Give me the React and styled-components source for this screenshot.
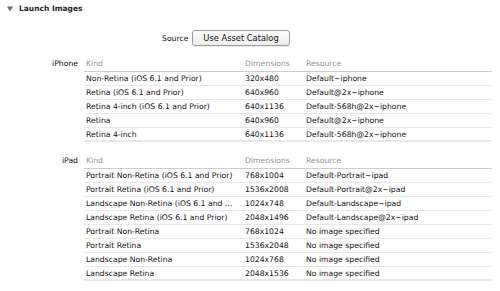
import React from 'react'
import styled, { createGlobalStyle } from 'styled-components'

const GlobalStyle = createGlobalStyle`
  html, body {
    margin: 0;
    padding: 0;
    background: #ffffff;
  }
  body {
    font-family: "DejaVu Sans", "Liberation Sans", sans-serif;
    font-size: 7.7px;
    color: #111;
  }
`;

const Page = styled.div`
  width: 500px;
  height: 291px;
  overflow: hidden;
  background: #fff;
`;

const Header = styled.div`
  display: flex;
  align-items: center;
  height: 17px;
  padding-left: 7px;
  gap: 6px;
  font-weight: bold;
  font-size: 7.5px;
  color: #222;
`;

const SourceRow = styled.div`
  display: flex;
  align-items: center;
  margin-top: 13px;
  padding-left: 162px;
  height: 16px;
  gap: 4px;
`;

const SourceLabel = styled.span`
  width: 26px;
`;

const Button = styled.button`
  width: 98px;
  height: 16px;
  padding: 0;
  border: 1px solid #9c9c9c;
  border-radius: 3px;
  background: linear-gradient(#ffffff, #ececec);
  font-family: "DejaVu Sans", sans-serif;
  font-size: 8.3px;
  color: #111;
  box-shadow: 0 1px 0 rgba(0, 0, 0, 0.08);
`;

const Section = styled.div`
  display: grid;
  grid-template-columns: 84px 408px;
  margin-top: ${p => p.$top}px;
`;

const DeviceLabel = styled.div`
  text-align: right;
  padding-right: 6px;
  height: 15px;
  line-height: 14px;
`;

const Table = styled.div`
  display: flex;
  flex-direction: column;
`;

const Row = styled.div`
  display: grid;
  grid-template-columns: 161px 61px 1fr;
  height: ${p => (p.$head ? 15 : 14)}px;
  box-sizing: border-box;
  border-bottom: ${p => (p.$last ? 2 : 1)}px solid ${p => (p.$head ? '#cdcdcd' : '#e8e8e8')};
  color: ${p => (p.$head ? '#959595' : '#111')};
  line-height: ${p => (p.$head ? 14 : 13)}px;
`;

const Cell = styled.div`
  padding-left: ${p => (p.$first ? 2 : 0)}px;
  padding-right: ${p => (p.$first ? 8 : 0)}px;
  white-space: nowrap;
  overflow: hidden;
  text-overflow: ellipsis;
`;

const iphone = [
  ['Non-Retina (iOS 6.1 and Prior)', '320x480', 'Default~iphone'],
  ['Retina (iOS 6.1 and Prior)', '640x960', 'Default@2x~iphone'],
  ['Retina 4-inch (iOS 6.1 and Prior)', '640x1136', 'Default-568h@2x~iphone'],
  ['Retina', '640x960', 'Default@2x~iphone'],
  ['Retina 4-inch', '640x1136', 'Default-568h@2x~iphone'],
]

const ipad = [
  ['Portrait Non-Retina (iOS 6.1 and Prior)', '768x1004', 'Default-Portrait~ipad'],
  ['Portrait Retina (iOS 6.1 and Prior)', '1536x2008', 'Default-Portrait@2x~ipad'],
  ['Landscape Non-Retina (iOS 6.1 and Prior)', '1024x748', 'Default-Landscape~ipad'],
  ['Landscape Retina (iOS 6.1 and Prior)', '2048x1496', 'Default-Landscape@2x~ipad'],
  ['Portrait Non-Retina', '768x1024', 'No image specified'],
  ['Portrait Retina', '1536x2048', 'No image specified'],
  ['Landscape Non-Retina', '1024x768', 'No image specified'],
  ['Landscape Retina', '2048x1536', 'No image specified'],
]

function DeviceTable({ label, rows, top }) {
  return (
    <Section $top={top}>
      <DeviceLabel>{label}</DeviceLabel>
      <Table>
        <Row $head>
          <Cell $first>Kind</Cell>
          <Cell>Dimensions</Cell>
          <Cell>Resource</Cell>
        </Row>
        {rows.map((r, i) => (
          <Row key={i} $last={i === rows.length - 1}>
            <Cell $first>{r[0]}</Cell>
            <Cell>{r[1]}</Cell>
            <Cell>{r[2]}</Cell>
          </Row>
        ))}
      </Table>
    </Section>
  )
}

export default function App() {
  return (
    <Page>
      <GlobalStyle />
      <Header>
        <svg width="6" height="6" viewBox="0 0 6 6">
          <polygon points="0,0.5 6,0.5 3,5.5" fill="#6e6e6e" />
        </svg>
        Launch Images
      </Header>
      <SourceRow>
        <SourceLabel>Source</SourceLabel>
        <Button>Use Asset Catalog</Button>
      </SourceRow>
      <DeviceTable label="iPhone" rows={iphone} top={11} />
      <DeviceTable label="iPad" rows={ipad} top={12} />
    </Page>
  )
}
